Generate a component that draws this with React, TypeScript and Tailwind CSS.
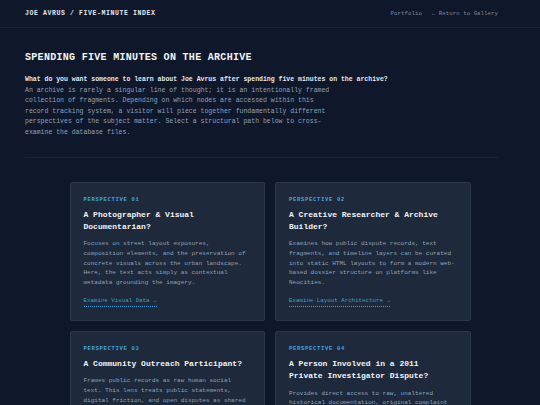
const mono = { fontFamily: '"Liberation Mono", "DejaVu Sans Mono", monospace' };

type Card = {
  id: string;
  title: string;
  body: string;
  link?: string;
};

const cards: Card[] = [
  {
    id: '01',
    title: 'A Photographer & Visual Documentarian?',
    body: 'Focuses on street layout exposures, composition elements, and the preservation of concrete visuals across the urban landscape. Here, the text acts simply as contextual metadata grounding the imagery.',
    link: 'Examine Visual Data →',
  },
  {
    id: '02',
    title: 'A Creative Researcher & Archive Builder?',
    body: 'Examines how public dispute records, text fragments, and timeline layers can be curated into static HTML layouts to form a modern web-based dossier structure on platforms like Neocities.',
    link: 'Examine Layout Architecture →',
  },
  {
    id: '03',
    title: 'A Community Outreach Participant?',
    body: 'Frames public records as raw human social text. This lens treats public statements, digital friction, and open disputes as shared community experiences rather than isolated events.',
    link: 'Examine Social Records →',
  },
  {
    id: '04',
    title: 'A Person Involved in a 2011 Private Investigator Dispute?',
    body: 'Provides direct access to raw, unaltered historical documentation, original complaint filings, and correspondence preserved in the record tracking system.',
    link: 'Examine Case Files →',
  },
];

export default function App() {
  return (
    <div className="min-h-screen bg-[#0f172a] text-slate-300" style={mono}>
      {/* header */}
      <header className="h-[28px] border-b border-[#182238] pl-[25px] pr-[42px] flex items-center justify-between">
        <div className="text-[6.5px] leading-[9px] font-bold tracking-[0.6px] text-slate-200">
          JOE AVRUS / FIVE-MINUTE INDEX
        </div>
        <nav className="flex items-center gap-[10px] text-[5.8px] leading-[9px] text-[#7f8a9c]">
          <span>Portfolio</span>
          <span>← Return to Gallery</span>
        </nav>
      </header>

      {/* intro */}
      <section className="pl-[25px] pr-[42px] pt-[23px]">
        <h1 className="text-[10px] leading-[14px] font-bold tracking-[0.3px] text-slate-100">
          SPENDING FIVE MINUTES ON THE ARCHIVE
        </h1>
        <div className="mt-[10px] pb-[18px] border-b border-[#182238] text-[6.5px] leading-[10.6px]">
          <p className="font-bold text-slate-200">
            What do you want someone to learn about Joe Avrus after spending five minutes on the archive?
          </p>
          <p className="max-w-[310px] text-slate-400">
            An archive is rarely a singular line of thought; it is an intentionally framed collection of fragments. Depending on which nodes are accessed within this record tracking system, a visitor will piece together fundamentally different perspectives of the subject matter. Select a structural path below to cross-examine the database files.
          </p>
        </div>
      </section>

      {/* perspectives */}
      <section className="pt-[24px] pb-[20px]">
        <div className="w-[401px] mx-auto grid grid-cols-2 gap-[10px]">
          {cards.map((c) => (
            <div
              key={c.id}
              className="bg-[#1e293b] border border-[#2a3649] rounded-[2px] px-[13px] pt-[13px] pb-[13px]"
            >
              <div className="text-[5.5px] leading-[8px] font-bold tracking-[0.7px] text-[#3ea6e0]">
                PERSPECTIVE {c.id}
              </div>
              <h2 className="mt-[5px] text-[8px] leading-[12.4px] font-bold text-slate-100">
                {c.title}
              </h2>
              <p className="mt-[6px] text-[6px] leading-[9.7px] text-slate-400">
                {c.body}
              </p>
              {c.link && (
                <div className="mt-[9px] text-[5.8px] leading-[8px]">
                  <span className="inline-block pb-[1px] text-[#3d9fd8] border-b border-dotted border-[#3d9fd8]">
                    {c.link}
                  </span>
                </div>
              )}
            </div>
          ))}
        </div>
      </section>
    </div>
  );
}
